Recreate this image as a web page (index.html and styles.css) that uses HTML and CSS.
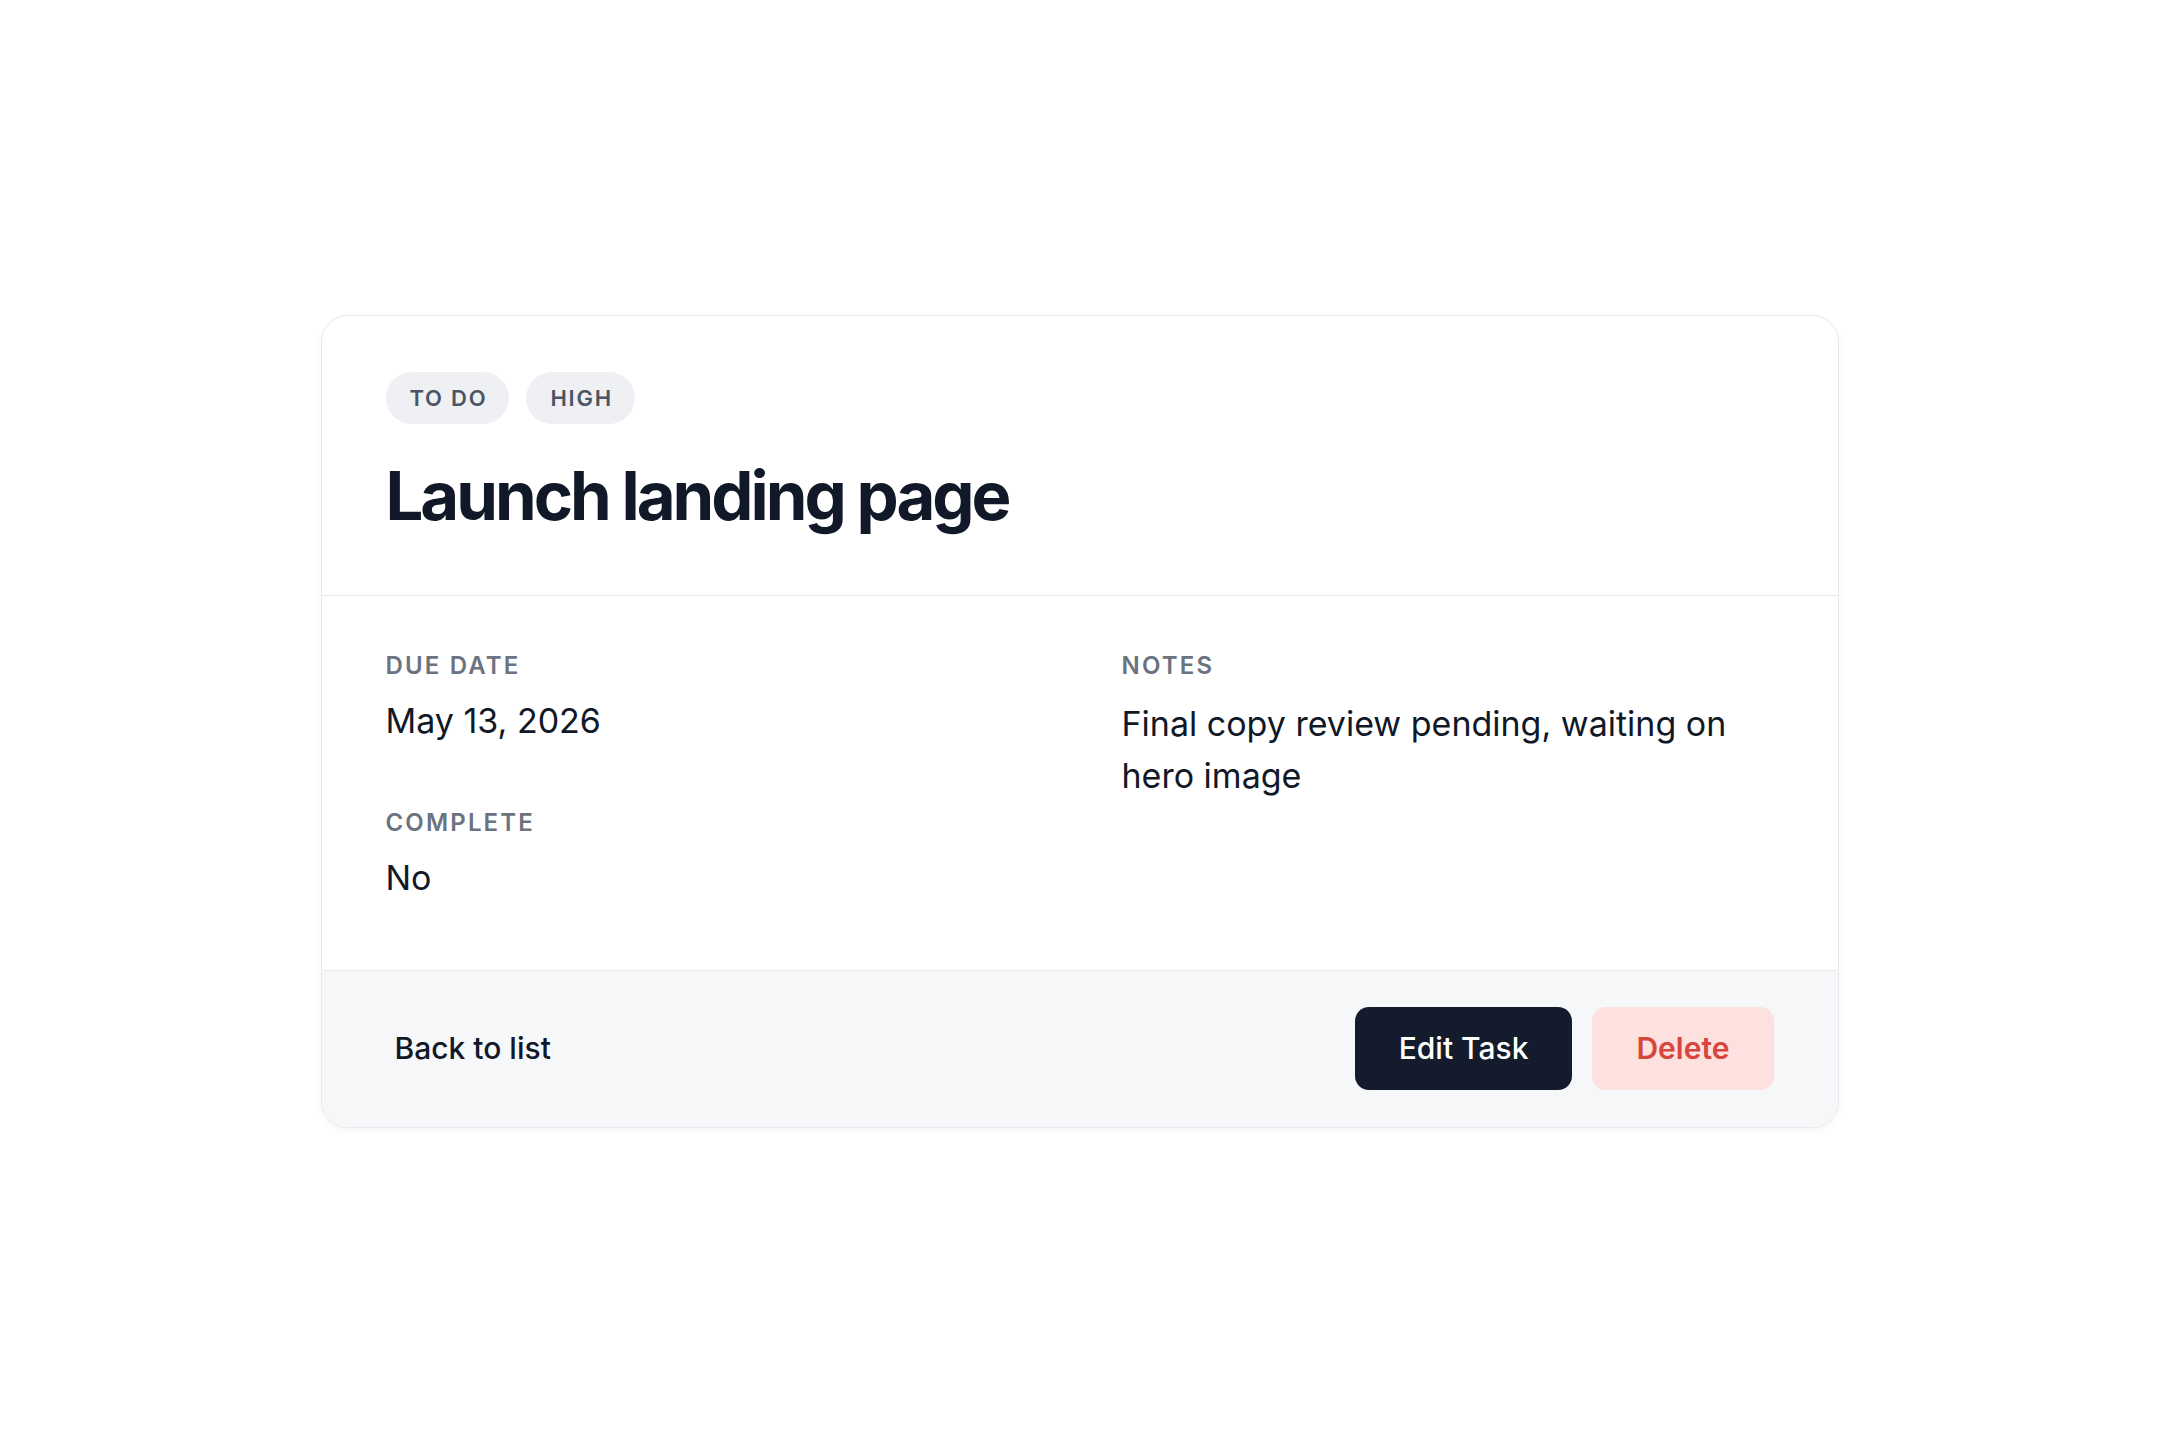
FILE: index.html
```html
<!DOCTYPE html>
<html lang="en">
    <head>
        <meta charset="UTF-8" />
        <meta name="viewport" content="width=device-width, initial-scale=1.0" />
        <title>Launch landing page</title>

        <link rel="stylesheet" href="styles.css">
    </head>

    <body>
        <div class="pagina">
            <div class="card">
                <div class="card_header">
                    <div class="tags">
                        <span class="tag">To do</span>
                        <span class="tag">High</span>
                    </div>
                    <h1 class="titulo">Launch landing page</h1>
                </div>

                <div class="card_body">
                    <div class="coluna">
                        <div class="campo">
                            <div class="label">Due date</div>
                            <div class="valor">May 13, 2026</div>
                        </div>
                        <div class="campo">
                            <div class="label">Complete</div>
                            <div class="valor">No</div>
                        </div>
                    </div>
                    <div class="coluna">
                        <div class="campo">
                            <div class="label">Notes</div>
                            <div class="valor valor_notas">Final copy review pending, waiting on hero image</div>
                        </div>
                    </div>
                </div>

                <div class="card_footer">
                    <a href="#" class="btn btnVoltar">Back to list</a>
                    <div class="acoes">
                        <a href="#" class="btn btnEditar">Edit Task</a>
                        <a href="#" class="btn btnDeletar">Delete</a>
                    </div>
                </div>
            </div>
        </div>
    </body>
</html>
```

FILE: styles.css
```css
body {
    margin: 0;
    background-color: #ffffff;
    font-family: Inter, "Noto Sans", sans-serif;
    color: #111827;
}

.pagina {
    display: flex;
    justify-content: center;
    align-items: center;
    min-height: 100vh;
}

.card {
    width: 1518px;
    box-sizing: border-box;
    border: 1px solid #e8e9ec;
    border-radius: 27px;
    overflow: hidden;
    background-color: #ffffff;
    box-shadow: 0px 2px 6px rgb(17 24 39 / 0.05);
}

.card_header {
    padding: 56px 64px 57px;
    border-bottom: 1px solid #e8e9ec;
}

.tags {
    display: flex;
    gap: 17px;
}

.tag {
    display: inline-block;
    background-color: #eff0f3;
    color: #4b5563;
    font-size: 22px;
    font-weight: 600;
    letter-spacing: 0.08em;
    text-transform: uppercase;
    line-height: 52px;
    padding: 0 22px 0 24px;
    border-radius: 26px;
}

.titulo {
    margin: 30px 0 0;
    font-size: 67px;
    font-weight: 700;
    line-height: 84px;
    letter-spacing: -0.045em;
    color: #111827;
}

.card_body {
    display: grid;
    grid-template-columns: 1fr 1fr;
    gap: 84px;
    padding: 53px 64px 70px;
}

.coluna {
    display: flex;
    flex-direction: column;
    gap: 63px;
}

.label {
    font-size: 24px;
    font-weight: 600;
    letter-spacing: 0.09em;
    text-transform: uppercase;
    color: #6b7280;
    line-height: 34px;
}

.valor {
    margin-top: 15px;
    font-size: 34px;
    line-height: 45px;
    color: #111827;
}

.valor_notas {
    line-height: 52px;
}

.card_footer {
    display: flex;
    justify-content: space-between;
    align-items: center;
    padding: 36px 64px 37px;
    background-color: #f6f7f9;
    border-top: 1px solid #e8e9ec;
}

.acoes {
    display: flex;
    gap: 20px;
}

.btn {
    display: inline-block;
    font-size: 30px;
    line-height: 43px;
    padding: 20px 44px;
    border-radius: 14px;
    text-decoration: none;
    font-weight: 500;
}

.btnVoltar {
    color: #111827;
    padding-left: 9px;
    padding-right: 9px;
}

.btnEditar {
    background-color: #141b2c;
    color: #ffffff;
}

.btnDeletar {
    background-color: #fde1df;
    color: #d6463c;
    font-weight: 600;
}
```
